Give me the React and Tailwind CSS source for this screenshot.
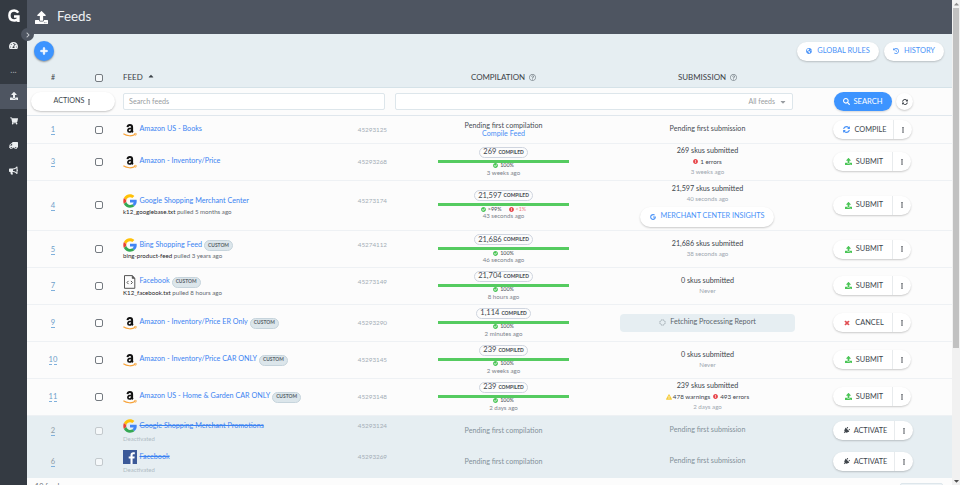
import { FaUpload, FaShoppingCart, FaTruck, FaBullhorn, FaTachometerAlt, FaPlus, FaGlobeAmericas, FaHistory, FaSearch, FaSyncAlt, FaEllipsisV, FaCheckCircle, FaExclamationCircle, FaExclamationTriangle, FaTimes, FaPlug, FaRegQuestionCircle, FaGoogle, FaCaretUp, FaCaretDown, FaChevronRight } from 'react-icons/fa';

const feeds = [
  { id: 1, logo: 'amazon', name: 'Amazon US - Books', code: '45293125', compile: 'pending', submit: 'pending', action: 'compile', h: 'h-[28px]' },
  { id: 3, logo: 'amazon', name: 'Amazon - Inventory/Price', code: '45293268', count: '269', ago: '3 weeks ago', skus: '269', errors: '1', subAgo: '3 weeks ago', action: 'submit', h: 'h-[37px] pb-px' },
  { id: 4, logo: 'google', name: 'Google Shopping Merchant Center', file: 'k12_googlebase.txt', pulled: 'pulled 5 months ago', code: '45273174', count: '21,597', split: true, ago: '43 seconds ago', skus: '21,597', subAgo: '40 seconds ago', insights: true, action: 'submit', h: 'h-[50px] pb-px' },
  { id: 5, logo: 'google', name: 'Bing Shopping Feed', custom: true, file: 'bing-product-feed', pulled: 'pulled 3 years ago', code: '45274112', count: '21,686', ago: '46 seconds ago', skus: '21,686', subAgo: '38 seconds ago', action: 'submit', h: 'h-[37px]' },
  { id: 7, logo: 'file', name: 'Facebook', custom: true, file: 'K12_facebook.txt', pulled: 'pulled 8 hours ago', code: '45273149', count: '21,704', ago: '8 hours ago', skus: '0', subAgo: 'Never', action: 'submit', h: 'h-[37px] pb-px' },
  { id: 9, logo: 'amazon', name: 'Amazon - Inventory/Price ER Only', custom: true, code: '45293290', count: '1,114', ago: '2 minutes ago', submit: 'fetching', action: 'cancel', h: 'h-[37px] pb-px' },
  { id: 10, logo: 'amazon', name: 'Amazon - Inventory/Price CAR ONLY', custom: true, code: '45293145', count: '239', ago: '2 weeks ago', skus: '0', subAgo: 'Never', action: 'submit', h: 'h-[37px] pb-px' },
  { id: 11, logo: 'amazon', name: 'Amazon US - Home & Garden CAR ONLY', custom: true, code: '45293148', count: '239', ago: '2 days ago', skus: '239', warnings: '478', errors: '493', subAgo: '2 days ago', action: 'submit', h: 'h-[37px] pb-px' },
  { id: 2, logo: 'google', name: 'Google Shopping Merchant Promotions', off: true, code: '45293124', compile: 'pending', submit: 'pending', action: 'activate', h: 'h-[31px] pb-[2px]' },
  { id: 6, logo: 'facebook', name: 'Facebook', off: true, code: '45293269', compile: 'pending', submit: 'pending', action: 'activate', h: 'h-[31px] pb-[2px]' },
];

const GRID = 'grid grid-cols-[52px_40px_268px_233px_175px_157px]';

function Logo({ type }) {
  switch (type) {
    case 'google':
      return (
        <svg viewBox="0 0 48 48" className="size-[14px] shrink-0">
          <path fill="#FFC107" d="M3 14 11.500 20.500C13.500 14.500 18.200 11 24 11c3.100 0 6 1.200 8 3l7-7C35 3.200 29.600 1 24 1 15 1 7 6 3 14z" />
          <path fill="#EA4335" d="M3 14C.3 20 .3 28 3 34l8.500-6.500c-.8-2.200-.8-4.800 0-7z" />
          <path fill="#34A853" d="M24 47c6 0 11.500-2 15.500-5.800L32 35.300c-2.200 1.500-4.900 2.200-8 2.200-5.800 0-10.600-4-12.500-10L3 34c4 8 12 13 21 13z" />
          <path fill="#4285F4" d="M46.500 20H24v9h12.700c-.7 2.600-2.400 4.900-4.700 6.300l7.500 5.900C44.300 37 47 31 47 24.500c0-1.500-.2-3-.5-4.500z" />
        </svg>
      );
    case 'facebook':
      return (
        <svg viewBox="0 0 14 14" className="size-[14px] shrink-0">
          <path fill="#3b5998" d="M0 0h14v14H0z" />
          <path fill="#fff" d="M9.600 14V8.600h1.800l.3-2.100H9.600V5.200c0-.6.200-1 1-1h1.200V2.300C11.500 2.200 10.900 2.200 10.200 2.200 8.600 2.200 7.500 3.200 7.500 4.900v1.600H5.700v2.100h1.800V14z" />
        </svg>
      );
    case 'file':
      return (
        <svg viewBox="0 0 14 14" className="size-[14px] shrink-0" fill="none" stroke="#555">
          <path d="M1.500 .6h7.700l2.600 2.600v10.100H1.500z" strokeWidth="1" />
          <path d="M9.200 .8v2.600h2.600z" fill="#444" strokeWidth=".6" />
          <path d="M5.500 5.900 4 7.500l1.500 1.600M7.900 5.900l1.500 1.600-1.500 1.600" strokeWidth="1" />
        </svg>
      );
    default:
      return (
        <svg viewBox="0 0 14 14" className="size-[14px] shrink-0" fill="none">
          <path d="M4.500 4.200C4.700 2.700 5.500 2.100 6.900 2.100c1.500 0 2.200.8 2.200 2v3.700c0 .7.300 1.100.8 1.500" stroke="#111" strokeWidth="2" />
          <path d="M8.800 5.300C6.200 5.200 4.900 5.900 4.900 7.400c0 1.100.6 1.600 1.500 1.600 1.400 0 2.400-1 2.400-2.600" stroke="#111" strokeWidth="1.700" />
          <path d="M.4 10.800c3.500 2.500 8.700 2.600 12 .5" stroke="#f7a33a" strokeWidth="1.200" />
          <path d="M11.200 10.600c1.300-.3 2.200-.2 2.200.1s-.3 1.300-.9 2" stroke="#f7a33a" strokeWidth=".8" />
        </svg>
      );
  }
}

function Checkbox({ faded }) {
  return <span className={`size-[8px] rounded-[2px] border bg-white/60 ${faded ? 'border-[#c3c9cd]' : 'border-[#747a80]'}`}></span>;
}

function Compilation({ feed }) {
  if (feed.compile === 'pending') {
    return (
      <div className={`flex flex-col items-center text-[7.150px] leading-[8px] ${feed.off ? 'text-[#84919a]' : 'text-[#484e54]'}`}>
        <span>Pending first compilation</span>
        {!feed.off && <span className="text-[#4a8ff5]">Compile Feed</span>}
      </div>
    );
  }
  return (
    <div className="flex flex-col items-center">
      <span className="flex h-[11px] items-center gap-[2px] rounded-full border border-[#cfd5df] px-[3px] text-[7.500px] text-[#40464d]">
        {feed.count} <span className="pt-px text-[4.900px] font-bold">COMPILED</span>
      </span>
      <span className="mt-[2px] h-[3px] w-[131px] bg-[#55cb60]"></span>
      <span className="flex h-[6px] items-center gap-[2px] text-[5.400px] text-[#454b51]">
        <FaCheckCircle className="size-[5px] text-[#4ac556]" /> {feed.split ? '>99%' : '100%'}
        {feed.split && (
          <span className="ml-[5px] flex items-center gap-[2px] text-[#f08080]">
            <FaExclamationCircle className="size-[5px] text-[#e8474c]" /> &lt;1%
          </span>
        )}
      </span>
      <span className="h-[8px] text-[6.150px] leading-[8px] text-[#7c848c]">{feed.ago}</span>
    </div>
  );
}

function Submission({ feed }) {
  if (feed.submit === 'pending') {
    return <span className={`text-[7.150px] ${feed.off ? 'text-[#84919a]' : 'text-[#484e54]'}`}>Pending first submission</span>;
  }
  if (feed.submit === 'fetching') {
    return (
      <span className="flex h-[18px] w-[175px] items-center justify-center gap-[4px] rounded-[4px] bg-[#e6eef2] text-[7.200px] text-[#5b656d]">
        <svg viewBox="0 0 8 8" className="size-[7px]">
          <circle cx="4" cy="4" r="3" fill="none" stroke="#8f9aa1" strokeWidth="1" strokeDasharray="1.700 .6" />
        </svg>
        Fetching Processing Report
      </span>
    );
  }
  return (
    <div className="flex flex-col items-center">
      <span className="text-[7.200px] leading-[10px] text-[#40464d]">{feed.skus} skus submitted</span>
      {feed.errors && (
        <span className="flex h-[11px] items-center gap-[1px] text-[6.300px] text-[#40464d]">
          {feed.warnings && (
            <>
              <FaExclamationTriangle className="size-[6px] text-[#f5cc3d]" />
              <span className="mr-[2px]">{feed.warnings} warnings</span>
            </>
          )}
          <FaExclamationCircle className="mr-px size-[5px] text-[#e8474c]" /> {feed.errors} errors
        </span>
      )}
      <span className="text-[6.150px] leading-[10px] text-[#9da7b0]">{feed.subAgo}</span>
      {feed.insights && (
        <button className="mr-[2px] mt-[3px] flex h-[20px] w-[134px] items-center justify-center gap-[4px] rounded-full bg-white pl-[2px] text-[7.250px] text-[#4a93f8] shadow-[0_1px_2px_rgba(0,0,0,0.2)]">
          <FaGoogle className="size-[6px]" /> MERCHANT CENTER INSIGHTS
        </button>
      )}
    </div>
  );
}

const actions = {
  compile: { label: 'COMPILE', width: 'w-[61px] gap-[5px]', icon: <FaSyncAlt className="size-[7px] text-[#4a93f8]" /> },
  submit: { label: 'SUBMIT', width: 'w-[60px] gap-[4px]', icon: <FaUpload className="size-[7px] text-[#4ac556]" /> },
  cancel: { label: 'CANCEL', width: 'w-[60px] gap-[5px]', icon: <FaTimes className="size-[6px] stroke-[#e0494e] stroke-[50px] text-[#e0494e]" /> },
  activate: { label: 'ACTIVATE', width: 'w-[62px] gap-[4px]', icon: <FaPlug className="size-[7px] rotate-45 text-[#3f454b]" /> },
};

function ActionButton({ type }) {
  const { label, width, icon } = actions[type];
  return (
    <div className="flex h-[19px] rounded-full bg-white text-[7.350px] text-[#40464d] shadow-[0_1px_2px_rgba(0,0,0,0.2)]">
      <button className={`flex items-center justify-center border-r border-[#e8ebed] pl-[3px] ${width}`}>
        {icon} {label}
      </button>
      <button className="flex w-[18px] items-center justify-center pr-px">
        <FaEllipsisV className="size-[6px]" />
      </button>
    </div>
  );
}

function FeedRow({ feed }) {
  return (
    <div className={`${GRID} ${feed.h} shrink-0 items-center ${feed.off ? 'bg-[#e6eef2]' : 'border-b border-[#eef1f4] bg-[#fcfcfc]'}`}>
      <span className={`justify-self-center border-b border-dashed border-[#7fb0dc] text-[7.600px] leading-[10px] ${feed.off ? 'text-[#8d9ba5]' : 'text-[#6f9fca]'}`}>{feed.id}</span>
      <span className="flex justify-center"><Checkbox faded={feed.off} /></span>
      <div className={`pl-[4px] ${feed.file ? 'pb-px' : ''}`}>
        <div className="flex items-center">
          <Logo type={feed.logo} />
          <span className={`ml-[2.500px] text-[7.200px] text-[#3b83f2] ${feed.off ? 'line-through' : ''}`}>{feed.name}</span>
          {feed.custom && <span className="ml-[2px] mt-px flex h-[11px] items-center rounded-full border border-[#c6d4dc] bg-[#dce6eb] px-[3px] text-[4.900px] font-bold text-[#5b656c]">CUSTOM</span>}
          <span className="ml-auto text-[6.300px] text-[#a3adb6]">{feed.code}</span>
        </div>
        {feed.file && <div className="text-[6.150px] leading-[7px] text-[#62686e]"><span className="text-[#1f2428]">{feed.file}</span> {feed.pulled}</div>}
        {feed.off && <div className="pt-[2px] text-[6px] leading-[7px] text-[#b0bcc4]">Deactivated</div>}
      </div>
      <Compilation feed={feed} />
      <div className="flex justify-center"><Submission feed={feed} /></div>
      <div className="flex pl-[38px]"><ActionButton type={feed.action} /></div>
    </div>
  );
}

function Sidebar() {
  return (
    <aside className="flex w-[27px] shrink-0 flex-col items-center bg-[#343a42] text-[#eceff1]">
      <svg viewBox="0 0 12 13" className="mt-[9px] h-[13px] w-[12px]" fill="none" stroke="#fff" strokeWidth="2.500">
        <path d="M10.300 3.600C9.300 2 7.900 1.400 6.200 1.400c-3 0-4.800 2.100-4.800 5s1.800 5 4.800 5c2.600 0 4.200-1.600 4.200-4H6M10.400 7.400V13" />
      </svg>
      <div className="mt-[11px] flex h-[25px] items-center"><FaTachometerAlt className="size-[9px]" /></div>
      <div className="flex h-[26px] items-center pb-[3px] text-[9px] text-[#a3a8ae]">...</div>
      <div className="flex h-[25px] w-full items-center justify-center bg-[#4e5561] pb-[2px]"><FaUpload className="size-[8px]" /></div>
      <div className="flex h-[25px] items-center pb-[2px]"><FaShoppingCart className="size-[8px]" /></div>
      <div className="flex h-[25px] items-center pb-[2px]"><FaTruck className="size-[9px] -scale-x-100" /></div>
      <div className="flex h-[25px] items-center pb-[2px]"><FaBullhorn className="size-[9px]" /></div>
    </aside>
  );
}

function App() {
  return (
    <div className="relative flex h-[485px] w-[960px] overflow-hidden bg-[#fcfcfc] font-['Lato',sans-serif]">
      <Sidebar />
      <span className="absolute left-[21px] top-[28px] z-10 flex size-[13px] items-center justify-center rounded-full bg-[#4e5561]">
        <FaChevronRight className="size-[6px] text-[#c5c9ce]" />
      </span>

      <main className="flex w-[925px] shrink-0 flex-col">
        <header className="flex h-[34px] shrink-0 items-center gap-[9px] bg-[#4e5561] pl-[8px] text-white">
          <FaUpload className="size-[13px]" />
          <h1 className="text-[13.300px] text-[#eceff1]">Feeds</h1>
        </header>

        <div className="flex h-[54px] shrink-0 flex-col border-b border-[#d5e2e8] bg-[#e6eef2]">
          <div className="flex h-[34px] items-center pl-[7px] pr-[8px]">
            <button className="flex size-[20px] items-center justify-center rounded-full bg-[#3d94ff] shadow-[0_1px_2px_rgba(0,0,0,0.4)]">
              <FaPlus className="size-[8px] stroke-white stroke-[40px] text-white" />
            </button>
            <div className="ml-auto flex gap-[5px] text-[7.450px] text-[#4a93f8]">
              <button className="flex h-[19px] w-[82px] items-center justify-center gap-[5px] rounded-full bg-white shadow-[0_1px_2px_rgba(0,0,0,0.2)]">
                <FaGlobeAmericas className="size-[6px]" /> GLOBAL RULES
              </button>
              <button className="flex h-[19px] w-[60px] items-center justify-center gap-[5px] rounded-full bg-white shadow-[0_1px_2px_rgba(0,0,0,0.2)]">
                <FaHistory className="size-[6px]" /> HISTORY
              </button>
            </div>
          </div>
          <div className={`${GRID} h-[19px] items-center text-[7.950px] text-[#3c4248]`}>
            <span className="text-center text-[7px]">#</span>
            <span className="flex justify-center"><Checkbox /></span>
            <span className="flex items-center gap-[4px] pl-[4px]">FEED <FaCaretUp className="mb-[3px] size-[8px]" /></span>
            <span className="flex items-center justify-center gap-[4px]">COMPILATION <FaRegQuestionCircle className="size-[7px] text-[#7d868d]" /></span>
            <span className="flex items-center justify-center gap-[4px]">SUBMISSION <FaRegQuestionCircle className="size-[7px] text-[#7d868d]" /></span>
          </div>
        </div>

        <div className="flex h-[28px] shrink-0 items-center border-b border-[#e0e7ed] pl-[4px] text-[7.200px]">
          <button className="flex h-[19px] w-[84px] items-center justify-center gap-[2px] rounded-full bg-white text-[7.200px] text-[#40464d] shadow-[0_1px_2px_rgba(0,0,0,0.22)]">
            ACTIONS <FaEllipsisV className="size-[6px]" />
          </button>
          <div className="ml-[8px] flex h-[17px] w-[262px] items-center rounded-[2px] border border-[#dde6eb] bg-white pl-[5px] pt-px text-[#999da1]">Search feeds</div>
          <div className="ml-[10px] flex h-[17px] w-[398px] items-center justify-end gap-[4px] rounded-[2px] border border-[#dde6eb] bg-white pr-[5px] text-[7px] text-[#999da1]">
            All feeds <FaCaretDown className="size-[8px]" />
          </div>
          <button className="ml-[41px] flex h-[19px] w-[58px] items-center justify-center gap-[3px] rounded-full bg-[#3d94ff] text-[7.600px] text-white shadow-[0_1px_2px_rgba(0,0,0,0.15)]">
            <FaSearch className="size-[7px]" /> SEARCH
          </button>
          <button className="ml-[4px] flex size-[17px] items-center justify-center rounded-full bg-white text-[#3f454b] shadow-[0_1px_2px_rgba(0,0,0,0.2)]">
            <FaSyncAlt className="size-[6px]" />
          </button>
        </div>

        {feeds.map((feed) => (
          <FeedRow key={feed.id} feed={feed} />
        ))}

        <footer className="flex shrink-0 items-start justify-between pl-[8px] pr-[9px] pt-[4px] text-[7.200px] text-[#6b7177]">
          <span>10 feeds</span>
          <span className="mt-[1px] h-[18px] w-[43px] rounded-[2px] border border-[#dde6eb] bg-[#eef3f6]"></span>
        </footer>
      </main>

      <div className="flex w-[8px] shrink-0 flex-col items-center bg-[#f1f1f1]">
        <FaCaretUp className="h-[8px] w-[5px] text-[#8f8f8f]" />
        <span className="h-[340px] w-[6px] bg-[#c1c1c1]"></span>
        <FaCaretDown className="mt-auto h-[8px] w-[5px] text-[#505050]" />
      </div>
    </div>
  );
}

export default App;
